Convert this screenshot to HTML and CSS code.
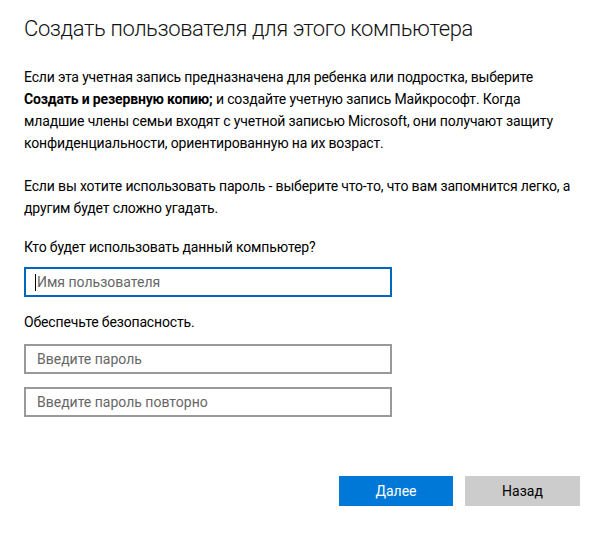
FILE: index.html
```html
<!DOCTYPE html>
<html lang="ru">
<head>
<meta charset="utf-8">
<title>Создать пользователя</title>
<link rel="stylesheet" href="styles.css">
</head>
<body>
<main class="page">
  <h1 class="title">Создать пользователя для этого компьютера</h1>
  <p class="para first">Если эта учетная запись предназначена для ребенка или подростка, выберите <b>Создать и резервную копию;</b> и создайте учетную запись Майкрософт. Когда младшие члены семьи входят с учетной записью Microsoft, они получают защиту конфиденциальности, ориентированную на их возраст.</p>
  <p class="para second">Если вы хотите использовать пароль - выберите что-то, что вам запомнится легко, а другим будет сложно угадать.</p>
  <p class="label who">Кто будет использовать данный компьютер?</p>
  <div class="field focused"><span class="caret"></span><span class="placeholder">Имя пользователя</span></div>
  <p class="label secure">Обеспечьте безопасность.</p>
  <div class="field"><span class="placeholder">Введите пароль</span></div>
  <div class="field second-pass"><span class="placeholder">Введите пароль повторно</span></div>
  <div class="actions">
    <button class="btn primary">Далее</button>
    <button class="btn secondary">Назад</button>
  </div>
</main>
</body>
</html>
```

FILE: styles.css
```css
html, body {
  margin: 0;
  padding: 0;
  background: #ffffff;
}
.page {
  width: 600px;
  height: 534px;
  box-sizing: border-box;
  padding: 13px 20px 0 24px;
  font-family: Roboto, "Noto Sans", sans-serif;
  color: #000;
}
.title {
  margin: 0;
  font-size: 22px;
  font-weight: 300;
  line-height: 32px;
  color: #111;
  letter-spacing: -0.4px;
}
.para {
  margin: 0;
  font-size: 14px;
  line-height: 22px;
  width: 560px;
  letter-spacing: -0.15px;
}
.para.first { margin-top: 21px; }
.para.second { margin-top: 21px; }
.label {
  margin: 0;
  font-size: 14px;
  line-height: 22px;
  letter-spacing: -0.15px;
}
.label.who { margin-top: 17px; }
.label.secure { margin-top: 14px; }
.field {
  width: 368px;
  height: 30px;
  box-sizing: border-box;
  border: 2px solid #999;
  display: flex;
  align-items: center;
  padding-left: 11px;
  font-size: 14px;
  color: #666;
}
.field.focused {
  border-color: #0067c0;
  margin-top: 9px;
  padding-left: 9px;
}
.secure + .field { margin-top: 11px; }
.field.second-pass { margin-top: 13px; }
.caret {
  width: 1px;
  height: 17px;
  background: #000;
  margin-right: 1px;
}
.actions {
  display: flex;
  justify-content: flex-end;
  gap: 12px;
  margin-top: 59px;
}
.btn {
  width: 115px;
  height: 30px;
  border: none;
  font-family: inherit;
  font-size: 14px;
  padding: 0;
}
.btn.primary {
  background: #0078d7;
  color: #fff;
  width: 114px;
}
.btn.secondary {
  background: #cccccc;
  color: #000;
}
```
